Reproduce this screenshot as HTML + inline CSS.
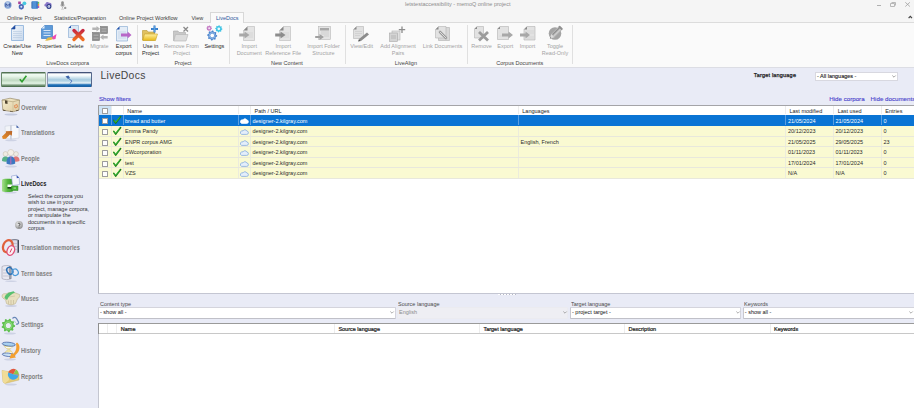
<!DOCTYPE html><html><head><meta charset="utf-8"><style>
*{box-sizing:border-box}
html,body{margin:0;padding:0;width:914px;height:408px;overflow:hidden;background:#e9ebf6;font-family:"Liberation Sans",sans-serif;font-size:5.5px;color:#222}
.a{position:absolute;white-space:nowrap}
svg.a{overflow:visible}
.tab{top:15px;color:#3a3a3a}
.lbl{color:#262626;text-align:center;line-height:6.6px}
.dis{color:#a3a3a3}
.grp{top:59.5px;color:#444}
.sep{top:25px;width:1px;height:39px;background:#e0e0e0}
.nav{color:#808080;font-weight:bold;font-size:6.6px;transform:scaleX(0.865);transform-origin:0 0}
.gh{color:#222}
.cell{color:#2a2a2a}
.sel{color:#fff}
</style></head><body>
<div class="a" style="left:0;top:0;width:914px;height:22px;background:#f5f5f5"></div>
<div class="a" style="left:405px;top:0.8px;color:#8c8c8c">letstestaccessibility - memoQ online project</div>
<div class="a" style="left:876.6px;top:5.2px;width:4.4px;height:0.8px;background:#b0b0b0"></div>
<svg class="a" style="left:890px;top:2px" width="6" height="5"><path d="M1.5 0.5H5.5V3.5M0.5 1.5H4.5V4.5H0.5Z" stroke="#a8a8a8" stroke-width="0.8" fill="none"/></svg>
<svg class="a" style="left:904.7px;top:2.3px" width="5.5" height="5"><path d="M0.3 0.3L4.9 4.5M4.9 0.3L0.3 4.5" stroke="#a0a0a0" stroke-width="0.8"/></svg>
<svg class="a" style="left:907.5px;top:15.3px" width="5" height="4"><path d="M0.6 3.2L2.3 1.3L4 3.2" stroke="#444" stroke-width="1.2" fill="none"/></svg>
<div class="a tab" style="left:7px">Online Project</div>
<div class="a tab" style="left:54px">Statistics/Preparation</div>
<div class="a tab" style="left:119px">Online Project Workflow</div>
<div class="a tab" style="left:191.5px">View</div>
<div class="a" style="left:0;top:22px;width:914px;height:46px;background:#fafafa;border-top:1px solid #dcdcdc;border-bottom:1px solid #dcdde4"></div>
<div class="a" style="left:210px;top:12px;width:34px;height:11px;background:#fafafa;border:1px solid #d8d8d8;border-bottom:none"></div>
<div class="a tab" style="left:216px;color:#2b579a">LiveDocs</div>
<div class="a lbl" style="left:-12.8px;top:43px;width:60px">Create/Use<br>New</div>
<div class="a lbl" style="left:19.200000000000003px;top:43px;width:60px">Properties</div>
<div class="a lbl" style="left:45.5px;top:43px;width:60px">Delete</div>
<div class="a lbl dis" style="left:69.3px;top:43px;width:60px">Migrate</div>
<div class="a lbl" style="left:93.7px;top:43px;width:60px">Export<br>corpus</div>
<div class="a lbl" style="left:120.6px;top:43px;width:60px">Use in<br>Project</div>
<div class="a lbl dis" style="left:151.5px;top:43px;width:60px">Remove From<br>Project</div>
<div class="a lbl" style="left:184.4px;top:43px;width:60px">Settings</div>
<div class="a lbl dis" style="left:219.2px;top:43px;width:60px">Import<br>Document</div>
<div class="a lbl dis" style="left:253.2px;top:43px;width:60px">Import<br>Reference File</div>
<div class="a lbl dis" style="left:293.5px;top:43px;width:60px">Import Folder<br>Structure</div>
<div class="a lbl dis" style="left:331.7px;top:43px;width:60px">View/Edit</div>
<div class="a lbl dis" style="left:368.0px;top:43px;width:60px">Add Alignment<br>Pairs</div>
<div class="a lbl dis" style="left:412.5px;top:43px;width:60px">Link Documents</div>
<div class="a lbl dis" style="left:451.6px;top:43px;width:60px">Remove</div>
<div class="a lbl dis" style="left:475.3px;top:43px;width:60px">Export</div>
<div class="a lbl dis" style="left:497.5px;top:43px;width:60px">Import</div>
<div class="a lbl dis" style="left:525.0px;top:43px;width:60px">Toggle<br>Read-Only</div>
<div class="a lbl grp" style="left:27.599999999999994px;width:80px">LiveDocs corpora</div>
<div class="a lbl grp" style="left:143px;width:80px">Project</div>
<div class="a lbl grp" style="left:247px;width:80px">New Content</div>
<div class="a lbl grp" style="left:365.8px;width:80px">LiveAlign</div>
<div class="a lbl grp" style="left:479.79999999999995px;width:80px">Corpus Documents</div>
<div class="a sep" style="left:137px"></div>
<div class="a sep" style="left:229px"></div>
<div class="a sep" style="left:345px"></div>
<div class="a sep" style="left:467px"></div>
<div class="a sep" style="left:572px"></div>
<svg class="a" style="left:11px;top:25px" width="13" height="16" viewBox="0 0 13 16"><defs><linearGradient id="g1" x1="0" y1="0" x2="1" y2="1"><stop offset="0" stop-color="#f4f8fc"/><stop offset="1" stop-color="#c8d8ec"/></linearGradient></defs><path d="M4 0.5H12.5V15.5H0.5V4Z" fill="url(#g1)" stroke="#9cbce0" stroke-width="1"/><path d="M0.5 4L4 0.5V4Z" fill="#1e4aa0" stroke="#1e4aa0" stroke-width="0.6"/><rect x="2" y="6" width="9" height="0.6" fill="#b4c8e0"/><rect x="2" y="8" width="9" height="0.6" fill="#b4c8e0"/><rect x="2" y="10" width="9" height="0.6" fill="#b4c8e0"/><rect x="2" y="12" width="9" height="0.6" fill="#b4c8e0"/></svg>
<svg class="a" style="left:41px;top:25px" width="16" height="17" viewBox="0 0 16 17"><path d="M3.5 0.5H11.5V13.5H0.5V3.5Z" fill="#5e9ad8" stroke="#4a86c8" stroke-width="0.8"/><path d="M0.5 3.5L3.5 0.5V3.5Z" fill="#e8f0fa"/><rect x="2.5" y="5" width="7" height="0.9" fill="#e4eefa"/><rect x="2.5" y="7.5" width="7" height="0.9" fill="#e4eefa"/><rect x="2.5" y="10" width="7" height="0.9" fill="#e4eefa"/><path d="M4 15.5L7 12.5L12 12L11.5 14.5L6 15.8Z" fill="#e4bc4c"/><path d="M11 12L15.5 9L14.5 14L12 14.5Z" fill="#ec4cb4"/></svg>
<svg class="a" style="left:67.5px;top:25px" width="17" height="17" viewBox="0 0 17 17"><defs><linearGradient id="gx" x1="0" y1="0" x2="0" y2="1"><stop offset="0" stop-color="#c82840"/><stop offset="1" stop-color="#f07020"/></linearGradient></defs><path d="M3 0.5H10.5V12.5H0.5V3Z" fill="#dbe7f4" stroke="#8fb0d6" stroke-width="0.7"/><path d="M0.5 3L3 0.5V3Z" fill="#1e4fa8"/><path d="M6 5.5L15 14.5M15 5.5L6 14.5" stroke="url(#gx)" stroke-width="3.4" stroke-linecap="round"/></svg>
<svg class="a" style="left:92px;top:26px" width="16" height="15" viewBox="0 0 16 15"><rect x="0.5" y="6.5" width="7" height="8" fill="#8e8e8e" stroke="#7a7a7a" stroke-width="0.6"/><rect x="8.5" y="0.5" width="7" height="7" fill="#8e8e8e" stroke="#7a7a7a" stroke-width="0.6"/><path d="M0.3 1.5H4.5V0L8 2.8L4.5 5.6V4.1H0.3Z" fill="#b4b4b4"/><path d="M15.7 9.9H11.5V8.4L8 11.2L11.5 14V12.5H15.7Z" fill="#b4b4b4"/><rect x="1.5" y="8.5" width="5" height="1.5" fill="#a8a8a8"/><rect x="1.5" y="11.5" width="5" height="1.5" fill="#a8a8a8"/><rect x="9.5" y="2" width="5" height="1.5" fill="#a8a8a8"/><rect x="9.5" y="4.5" width="5" height="1.5" fill="#a8a8a8"/></svg>
<svg class="a" style="left:115.5px;top:25.5px" width="16" height="16" viewBox="0 0 16 16"><path d="M3.5 0.5H11.5V15H0.5V3.5Z" fill="#e4edf7" stroke="#8fb0d6" stroke-width="0.7"/><path d="M0.5 3.5L3.5 0.5V3.5Z" fill="#1e4fa8"/><path d="M2 6H10M2 8H10M2 10H10M2 12H10" stroke="#b9cde4" stroke-width="0.6"/><path d="M5 7.5H11.5V5.5L15.5 9L11.5 12.5V10.5H5Z" fill="#b868c8"/></svg>
<svg class="a" style="left:142px;top:25px" width="17" height="17" viewBox="0 0 17 17"><defs><linearGradient id="gf" x1="0" y1="0" x2="0" y2="1"><stop offset="0" stop-color="#fff0a0"/><stop offset="1" stop-color="#e8b818"/></linearGradient></defs><path d="M0.5 5.5H5L6 7H12.5V15H0.5Z" fill="#e0c060" stroke="#b89830" stroke-width="0.6"/><path d="M2.5 9H15.5L13.5 15.5H0.8Z" fill="url(#gf)" stroke="#c8a020" stroke-width="0.6"/><path d="M12.5 0.5V7.5M9 4H16" stroke="#2a70c0" stroke-width="2"/><path d="M12.5 1V7M9.5 4H15.5" stroke="#60a8e8" stroke-width="0.8"/></svg>
<svg class="a" style="left:173px;top:25.5px" width="17" height="16" viewBox="0 0 17 16"><path d="M0.5 5H5L6 6.5H12.5V14.5H0.5Z" fill="#c8c8c8" stroke="#aaa" stroke-width="0.6"/><path d="M2.5 8.5H15L13 15H0.8Z" fill="#dcdcdc" stroke="#b4b4b4" stroke-width="0.6"/><path d="M10.5 1L15 5.5M15 1L10.5 5.5" stroke="#8a8a8a" stroke-width="1.3"/></svg>
<svg class="a" style="left:205.5px;top:25px" width="17" height="17" viewBox="0 0 17 17"><polygon points="11.20,10.50 11.10,11.48 9.90,12.03 9.53,12.72 9.74,14.04 8.98,14.66 7.73,14.20 6.98,14.42 6.20,15.50 5.22,15.40 4.67,14.20 3.98,13.83 2.66,14.04 2.04,13.28 2.50,12.03 2.28,11.28 1.20,10.50 1.30,9.52 2.50,8.97 2.87,8.28 2.66,6.96 3.42,6.34 4.67,6.80 5.42,6.58 6.20,5.50 7.18,5.60 7.73,6.80 8.42,7.17 9.74,6.96 10.36,7.72 9.90,8.97 10.12,9.72" fill="#4a84cc"/><circle cx="6.2" cy="10.5" r="1.90" fill="#ffffff"/><circle cx="6.2" cy="10.5" r="2.9" fill="none" stroke="#9cc0ec" stroke-width="0.9"/><polygon points="6.00,3.20 5.95,3.75 5.27,4.06 5.06,4.44 5.18,5.18 4.76,5.53 4.06,5.27 3.64,5.40 3.20,6.00 2.65,5.95 2.34,5.27 1.96,5.06 1.22,5.18 0.87,4.76 1.13,4.06 1.00,3.64 0.40,3.20 0.45,2.65 1.13,2.34 1.34,1.96 1.22,1.22 1.64,0.87 2.34,1.13 2.76,1.00 3.20,0.40 3.75,0.45 4.06,1.13 4.44,1.34 5.18,1.22 5.53,1.64 5.27,2.34 5.40,2.76" fill="#c47cc4"/><circle cx="3.2" cy="3.2" r="1.06" fill="#f4e0f4"/><polygon points="16.40,3.80 16.33,4.50 15.46,4.90 15.19,5.40 15.35,6.35 14.80,6.79 13.90,6.46 13.36,6.62 12.80,7.40 12.10,7.33 11.70,6.46 11.20,6.19 10.25,6.35 9.81,5.80 10.14,4.90 9.98,4.36 9.20,3.80 9.27,3.10 10.14,2.70 10.41,2.20 10.25,1.25 10.80,0.81 11.70,1.14 12.24,0.98 12.80,0.20 13.50,0.27 13.90,1.14 14.40,1.41 15.35,1.25 15.79,1.80 15.46,2.70 15.62,3.24" fill="#40c4e4"/><circle cx="12.8" cy="3.8" r="1.37" fill="#e8fafe"/></svg>
<svg class="a" style="left:239px;top:26px" width="17" height="15" viewBox="0 0 17 15"><path d="M8.5 0.5H15.5V14.5H4.5V4.5Z" fill="#e4e4e4" stroke="#b8b8b8" stroke-width="0.6"/><path d="M4.5 4.5L8.5 0.5V4.5Z" fill="#888"/><path d="M6.5 7H14M6.5 9H14M6.5 11H14" stroke="#c8c8c8" stroke-width="0.5"/><path d="M0.2 7.5H5.5V5.5L10.5 9L5.5 12.5V10.5H0.2Z" fill="#a8a8a8"/></svg>
<svg class="a" style="left:275px;top:26px" width="17" height="15" viewBox="0 0 17 15"><path d="M8.5 0.5H15.5V14.5H4.5V4.5Z" fill="#e4e4e4" stroke="#b8b8b8" stroke-width="0.6"/><path d="M4.5 4.5L8.5 0.5V4.5Z" fill="#888"/><path d="M6.5 7H14M6.5 9H14M6.5 11H14" stroke="#c8c8c8" stroke-width="0.5"/><path d="M0.2 7.5H5.5V5.5L10.5 9L5.5 12.5V10.5H0.2Z" fill="#8c8c8c"/></svg>
<svg class="a" style="left:315px;top:26px" width="17" height="15" viewBox="0 0 17 15"><rect x="3.5" y="0.5" width="12" height="13" fill="#e4e4e4" stroke="#b8b8b8" stroke-width="0.6"/><rect x="5" y="2" width="9" height="2.5" fill="#a8a8a8"/><path d="M6 6H14M6 8H14M9 10H14" stroke="#c0c0c0" stroke-width="0.6"/><path d="M0.2 10H4.5V8L9 11L4.5 14V12H0.2Z" fill="#a0a0a0"/></svg>
<svg class="a" style="left:353px;top:26px" width="17" height="15" viewBox="0 0 17 15"><path d="M3.5 0.5H10.5V12.5H0.5V3.5Z" fill="#e0e0e0" stroke="#b4b4b4" stroke-width="0.6"/><path d="M0.5 3.5L3.5 0.5V3.5Z" fill="#888"/><path d="M2 5.5H9M2 7.5H9M2 9.5H7" stroke="#c4c4c4" stroke-width="0.5"/><path d="M6 13L14 6.5L16 8.5L8 15Z" fill="#8c8c8c"/><path d="M5 15.5L6 13L8 15Z" fill="#555"/></svg>
<svg class="a" style="left:389px;top:25.5px" width="18" height="16" viewBox="0 0 18 16"><rect x="3" y="5" width="8" height="9" fill="#e0e0e0" stroke="#b4b4b4" stroke-width="0.6"/><rect x="0.5" y="7" width="8" height="8.5" fill="#d4d4d4" stroke="#a8a8a8" stroke-width="0.6"/><path d="M2 10H7M2 12H7" stroke="#999" stroke-width="0.5"/><path d="M13 0.5V7M9.8 3.7H16.2" stroke="#8c8c8c" stroke-width="1.3"/></svg>
<svg class="a" style="left:435px;top:26px" width="16" height="15" viewBox="0 0 16 15"><path d="M3.5 1.5H14.5V14.5H3.5Z" fill="#d8d8d8" stroke="#b0b0b0" stroke-width="0.6"/><path d="M3.5 0.5H11V12H0.5V3.5Z" fill="#e2e2e2" stroke="#b4b4b4" stroke-width="0.6"/><path d="M0.5 3.5L3.5 0.5V3.5Z" fill="#888"/><path d="M5 6L11 12" stroke="#9a9a9a" stroke-width="2.6" stroke-linecap="round"/><path d="M5 6L11 12" stroke="#dcdcdc" stroke-width="1" stroke-linecap="round"/></svg>
<svg class="a" style="left:474px;top:26px" width="16" height="15" viewBox="0 0 16 15"><path d="M3 0.5H9.5V12H0.5V3Z" fill="#e2e2e2" stroke="#b4b4b4" stroke-width="0.6"/><path d="M0.5 3L3 0.5V3Z" fill="#888"/><path d="M5 6L14 14.5M14 6L5 14.5" stroke="#9c9c9c" stroke-width="2.8"/></svg>
<svg class="a" style="left:497px;top:26px" width="17" height="15" viewBox="0 0 17 15"><path d="M3 0.5H11.5V13.5H0.5V3Z" fill="#e2e2e2" stroke="#b4b4b4" stroke-width="0.6"/><path d="M0.5 3L3 0.5V3Z" fill="#888"/><path d="M2.5 10H6.5" stroke="#c8c8c8" stroke-width="0.5"/><path d="M5 7.5H11.5V5.5L16 9L11.5 12.5V10.5H5Z" fill="#a8a8a8"/></svg>
<svg class="a" style="left:520px;top:26px" width="16" height="15" viewBox="0 0 16 15"><path d="M7 0.5H15V14H4V3.5Z" fill="#e2e2e2" stroke="#b4b4b4" stroke-width="0.6"/><path d="M4 3.5L7 0.5V3.5Z" fill="#888"/><path d="M6.5 5H14M6.5 7H14M6.5 11H14M6.5 13H14" stroke="#cacaca" stroke-width="0.5"/><path d="M0 7.5H5.5V5.5L10 9L5.5 12.5V10.5H0Z" fill="#a8a8a8"/></svg>
<svg class="a" style="left:546px;top:25px" width="17" height="17" viewBox="0 0 17 17"><circle cx="9" cy="8.5" r="6.3" fill="#a4a4a4"/><g transform="rotate(45 9 8.5)"><rect x="6.6" y="0.5" width="4.8" height="11" fill="#b8b8b8"/><rect x="7.6" y="1" width="1" height="10" fill="#8a8a8a"/><rect x="9.4" y="1" width="1" height="10" fill="#d0d0d0"/><rect x="6.6" y="-0.5" width="4.8" height="2" rx="0.8" fill="#909090"/><path d="M6.6 11.5L9 15.5L11.4 11.5Z" fill="#dcdcdc"/><path d="M8.3 14.3L9 15.8L9.7 14.3Z" fill="#666"/></g></svg>
<svg class="a" style="left:4.3px;top:0.8px" width="8" height="8" viewBox="0 0 8 8"><circle cx="3.9" cy="4" r="3.7" fill="#8aa8d8"/><circle cx="3.4" cy="3.2" r="2.2" fill="#c8d8f0" opacity="0.7"/><path d="M1.9 5.6V2.6L3.9 4.6L5.9 2.6V5.6" stroke="#1e3c90" stroke-width="0.9" fill="none"/></svg>
<svg class="a" style="left:17.5px;top:0.6px" width="9" height="9" viewBox="0 0 9 9"><rect x="0.2" y="0.5" width="2.6" height="2.6" fill="#a8449a"/><circle cx="6.4" cy="2.3" r="1.9" fill="#48c8e0"/><circle cx="3.3" cy="5.7" r="2.6" fill="#4868b8"/><circle cx="3.3" cy="5.7" r="1" fill="#dde6f6"/><path d="M2.6 8L3.3 8.8L4 8Z" fill="#4868b8"/></svg>
<svg class="a" style="left:31px;top:1px" width="8.5" height="8" viewBox="0 0 8.5 8"><rect x="0.5" y="0.3" width="6.5" height="7.4" rx="0.6" fill="#3a7ac8"/><rect x="1.2" y="0.3" width="4" height="7.4" fill="#60a0e0" opacity="0.6"/><rect x="6.8" y="0.8" width="1.4" height="2" fill="#58c058"/><rect x="6.8" y="2.9" width="1.4" height="2" fill="#f09040"/><rect x="6.8" y="5" width="1.4" height="2" fill="#b058c0"/><path d="M0.3 2H1.5M0.3 4H1.5M0.3 6H1.5" stroke="#204880" stroke-width="0.5"/></svg>
<svg class="a" style="left:44.3px;top:1px" width="8.5" height="8.5" viewBox="0 0 8.5 8.5"><path d="M1 5.5C0 5 0 3 1.5 2.8C1.8 1 4 0.5 5 1.8C6.5 1.2 8 2.3 7.5 4L7 5.5Z" fill="#8a78c8"/><circle cx="4.9" cy="5.4" r="2.5" fill="#2c3c88"/><circle cx="4.9" cy="5.4" r="1.3" fill="#d8dcf0"/><path d="M4.4 4.8L5.4 4.8L4.9 6Z" fill="#2c3c88"/></svg>
<svg class="a" style="left:59.5px;top:1px" width="7" height="8.5" viewBox="0 0 7 8.5"><rect x="1.2" y="0.3" width="2.6" height="5" rx="1.3" fill="#8c8c8c"/><path d="M0.5 3.5V4.3C0.5 6 4.5 6 4.5 4.3V3.5" stroke="#a0a0a0" stroke-width="0.5" fill="none"/><path d="M2.5 6V7.5" stroke="#999" stroke-width="0.6"/><circle cx="5.2" cy="6.9" r="1.2" fill="#9c9c9c"/><path d="M1 8.2H4" stroke="#aaa" stroke-width="0.5"/></svg>
<div class="a" style="left:0.5px;top:72px;width:45px;height:14.5px;border-radius:1px;border-left:1px solid #6a886c;border-right:1px solid #9ab09c;background:linear-gradient(#4a6a4c 0,#5a7a5c 6%,#f0fbf2 14%,#e8f6ea 28%,#c0d8c2 55%,#d8ecda 70%,#e0f0e2 76%,#7a9a7c 88%,#3e6040 100%)"></div>
<svg class="a" style="left:19px;top:74.5px" width="8" height="8"><path d="M0.8 4.2L3 6.8L7.4 0.8" stroke="#2e9e2e" stroke-width="1.6" fill="none"/></svg>
<div class="a" style="left:46.5px;top:72px;width:45px;height:14.5px;border-radius:1px;border-left:1px solid #9098b0;border-right:1px solid #56688c;background:linear-gradient(#3c4c70 0,#4a5a80 6%,#ffffff 12%,#f4fafc 24%,#a8cce0 52%,#b8d8e8 62%,#eaf4f8 74%,#4a8cc4 82%,#1a6cb4 90%,#1a5c9c 100%)"></div>
<svg class="a" style="left:65px;top:74.5px" width="8" height="9"><path d="M0.5 1.5L3.5 0.5L5 3L3 4Z" fill="#3c64a8"/><path d="M3.5 3.5L7 6L5 8.5" stroke="#5a7ec0" stroke-width="1" fill="none"/></svg>
<div class="a" style="left:0;top:91px;width:91.5px;height:1px;background:#c9cbd4"></div>
<div class="a nav" style="left:21px;top:103.6px">Overview</div>
<div class="a nav" style="left:21px;top:129.2px">Translations</div>
<div class="a nav" style="left:21px;top:155.1px">People</div>
<div class="a nav" style="left:21px;top:244.1px">Translation memories</div>
<div class="a nav" style="left:21px;top:269.70000000000005px">Term bases</div>
<div class="a nav" style="left:21px;top:295.3px">Muses</div>
<div class="a nav" style="left:21px;top:321.1px">Settings</div>
<div class="a nav" style="left:21px;top:346.90000000000003px">History</div>
<div class="a nav" style="left:21px;top:372.70000000000005px">Reports</div>
<div class="a nav" style="left:20.8px;top:180.2px;color:#1a1a1a">LiveDocs</div>
<div class="a" style="left:28px;top:192.7px;line-height:6.45px;color:#333">Select the corpora you<br>wish to use in your<br>project, manage corpora,<br>or manipulate the<br>documents in a specific<br>corpus</div>
<svg class="a" style="left:15.3px;top:221px" width="8" height="8" viewBox="0 0 8 8"><defs><radialGradient id="gh" cx="0.4" cy="0.35" r="0.7"><stop offset="0" stop-color="#f0f0f0"/><stop offset="0.6" stop-color="#b4b4b4"/><stop offset="1" stop-color="#8c8c8c"/></radialGradient></defs><circle cx="4" cy="4" r="3.9" fill="url(#gh)"/><path d="M2.9 3C2.9 2 5.1 2 5.1 3.1C5.1 3.9 4 4 4 4.9" stroke="#4a4a4a" stroke-width="0.9" fill="none"/><circle cx="4" cy="6.1" r="0.5" fill="#4a4a4a"/></svg>
<svg class="a" style="left:0.5px;top:97px" width="19.5" height="19" viewBox="0 0 19.5 19"><defs><linearGradient id="gb" x1="0" y1="0" x2="1" y2="1"><stop offset="0" stop-color="#f6eed0"/><stop offset="1" stop-color="#dccaa0"/></linearGradient></defs><ellipse cx="10" cy="17.5" rx="6.5" ry="1.1" fill="#c4cade"/><path d="M1 3L9 1.2L18.5 3L18 13L12 14.8L1.8 13.2Z" fill="url(#gb)" stroke="#8c7c58" stroke-width="0.6"/><path d="M1 3L12 4.8L18.5 3" stroke="#a89870" stroke-width="0.6" fill="none"/><path d="M12 4.8V14.8" stroke="#c8b890" stroke-width="0.6"/><path d="M4 3.3L6.5 3.8V7L4 6.5Z" fill="#504430"/><path d="M2 12.5L4.5 13.2V14L2 13.5ZM9 13.8L12 14.5V15L9 14.6ZM15 13.5L17.5 12.8V13.6L15 14.3Z" fill="#504430"/><path d="M13.5 8.5L16 7.5L16.5 10L14 11Z" fill="none" stroke="#e08850" stroke-width="0.9"/></svg>
<svg class="a" style="left:0.5px;top:123px" width="19" height="19" viewBox="0 0 19 19"><defs><linearGradient id="ga" x1="0" y1="1" x2="1" y2="0"><stop offset="0" stop-color="#e8902c"/><stop offset="1" stop-color="#b86428"/></linearGradient></defs><ellipse cx="10" cy="17.3" rx="6" ry="0.9" fill="#cdd2e4"/><path d="M4 3.2L10 2.5V16L4.5 15.5Z" fill="#f2f4f8" stroke="#c4ccd8" stroke-width="0.5"/><path d="M10 2.5L15.5 2.2L18 4.5V15L10 16Z" fill="#f6f8fc" stroke="#c0c8d8" stroke-width="0.5"/><path d="M15.5 2.2V4.8H18Z" fill="#2a4c9c"/><path d="M10 2.5V16.5" stroke="#a8b0c0" stroke-width="0.6"/><path d="M1 13.5L5 9.8L4.8 8.2L11.2 8L10.8 12.8L9 11.6L4.8 15.8L1.8 16Z" fill="url(#ga)"/></svg>
<svg class="a" style="left:0.5px;top:148px" width="19.5" height="21" viewBox="0 0 19.5 21"><ellipse cx="10" cy="18.5" rx="6" ry="0.9" fill="#cdd2e4"/><circle cx="4.5" cy="6" r="2.4" fill="#f0ece4" stroke="#c0b8a8" stroke-width="0.5"/><path d="M1 13C1 9.5 2.5 8.6 4.5 8.6S8 9.5 8 13C6 14 3 14 1 13Z" fill="#58b088"/><circle cx="15" cy="6" r="2.4" fill="#f0ece4" stroke="#c0b8a8" stroke-width="0.5"/><path d="M11.5 13C11.5 9.5 13 8.6 15 8.6S18.5 9.5 18.5 13C16.5 14 13.5 14 11.5 13Z" fill="#e07878"/><circle cx="9.8" cy="4.6" r="3.1" fill="#f4f0e8" stroke="#c4bcac" stroke-width="0.5"/><path d="M5.5 15.5C5.5 9.8 7.3 8.4 9.8 8.4S14.2 9.8 14.2 15.5C12 16.8 7.5 16.8 5.5 15.5Z" fill="#3c78c0"/><path d="M9.3 8.6L10.3 8.6L10.5 15L9.8 17L9.1 15Z" fill="#a86cb8"/></svg>
<svg class="a" style="left:0.5px;top:174px" width="19.5" height="20" viewBox="0 0 19.5 20"><defs><linearGradient id="gg" x1="0" y1="0" x2="1" y2="0"><stop offset="0" stop-color="#a8e090"/><stop offset="0.5" stop-color="#58b840"/><stop offset="1" stop-color="#3a9a2a"/></linearGradient></defs><ellipse cx="9.5" cy="18.6" rx="6.5" ry="0.8" fill="#cdd2e4"/><path d="M1 6C1 5.3 3 4.8 6.5 4.8S12 5.3 12 6V17C12 17.6 10 18 6.5 18S1 17.6 1 17Z" fill="url(#gg)"/><path d="M10.5 2L15.5 1.2L18.2 3.8L18.6 10.5L11.5 11.5Z" fill="#f4f6fc" stroke="#8c9cd0" stroke-width="0.6"/><path d="M15.5 1.2L15.8 4.2L18.2 3.8Z" fill="#3454b0"/><rect x="6.5" y="10.5" width="5" height="2.6" fill="#f8fff8"/><rect x="6.5" y="13" width="4.5" height="1.6" fill="#183c18"/><path d="M10.5 12H17V16.5H10.5Z" fill="#48b038" stroke="#2e8a22" stroke-width="0.5"/><rect x="12.5" y="13.5" width="2.5" height="1.2" fill="#a8e098"/></svg>
<svg class="a" style="left:0.5px;top:237px" width="19.5" height="21" viewBox="0 0 19.5 21"><path d="M9 3C11 1.8 16 1.8 18 3V15.5C16 16.8 11 16.8 9 15.5Z" fill="#dcdae8"/><path d="M16.5 2.6C17.5 3 18 3.2 18 3.5V15.5L16.5 16Z" fill="#404858"/><path d="M9.5 3.5C11 2.5 15 2.5 16.5 3" stroke="#505868" stroke-width="0.8" fill="none"/><path d="M10 6.5H16M10 9.5H16M10 12.5H16" stroke="#a8a8c0" stroke-width="0.5"/><ellipse cx="6.8" cy="9.2" rx="4.6" ry="6.3" transform="rotate(22 6.8 9.2)" fill="none" stroke="#e0603c" stroke-width="2.2"/><ellipse cx="9.8" cy="13.5" rx="3.6" ry="5" transform="rotate(22 9.8 13.5)" fill="#fcf0f4" stroke="#e05078" stroke-width="1.3"/><path d="M9 15.5L10.8 11.5" stroke="#d84060" stroke-width="1"/></svg>
<svg class="a" style="left:0.5px;top:263px" width="19.5" height="20" viewBox="0 0 19.5 20"><ellipse cx="10" cy="18.2" rx="6" ry="0.8" fill="#cdd2e4"/><path d="M1 3.5C3 2.2 8.5 2.2 10.5 3.5V15.5C8.5 17 3 17 1 15.5Z" fill="#e8e8f0" stroke="#9c9cac" stroke-width="0.6"/><path d="M9 3V16" stroke="#505868" stroke-width="1"/><path d="M2 7H8.5M2 10H8.5M2 13H8.5" stroke="#b0b0c4" stroke-width="0.6"/><ellipse cx="8.8" cy="7.8" rx="2.8" ry="3.6" transform="rotate(-30 8.8 7.8)" fill="none" stroke="#2c70b4" stroke-width="1.5"/><ellipse cx="14.2" cy="9.2" rx="3" ry="3.3" transform="rotate(-30 14.2 9.2)" fill="none" stroke="#4c9ad8" stroke-width="1.2"/></svg>
<svg class="a" style="left:0.5px;top:289px" width="19.5" height="19" viewBox="0 0 19.5 19"><ellipse cx="10" cy="17" rx="6" ry="0.9" fill="#cdd2e4"/><path d="M1 7C1 5 3 4.3 5 4.8L8 3.6L14 3.8L18.5 5.5C19 7.5 18 9.2 16.5 9.8L14.5 14.5C12.5 16.3 7.5 16.3 5.5 14.5L4.5 10.5C2.5 9.8 1 8.8 1 7Z" fill="#e8e0c0" stroke="#b4a880" stroke-width="0.5"/><path d="M3.5 9C4 5.5 7.5 3 12.5 2.2L14 3.4C10.5 4.6 7.5 7.5 6 11Z" fill="#58c070"/><path d="M7.5 11.5V15M10 11V15.5M12.5 11V15" stroke="#c0b490" stroke-width="0.6"/><path d="M8 8L14 7" stroke="#c8bc98" stroke-width="0.6"/></svg>
<svg class="a" style="left:0px;top:314px" width="20" height="21" viewBox="0 0 20 21"><ellipse cx="10" cy="19.5" rx="6" ry="0.9" fill="#cdd2e4"/><polygon points="15.10,11.50 15.00,12.68 13.41,13.36 13.01,14.22 13.51,15.87 12.67,16.71 11.02,16.21 10.16,16.61 9.48,18.20 8.30,18.30 7.36,16.86 6.44,16.61 4.90,17.39 3.93,16.71 4.13,15.00 3.59,14.22 1.91,13.83 1.60,12.68 2.86,11.50 2.94,10.56 1.91,9.17 2.41,8.10 4.13,8.00 4.80,7.33 4.90,5.61 5.97,5.11 7.36,6.14 8.30,6.06 9.48,4.80 10.63,5.11 11.02,6.79 11.80,7.33 13.51,7.13 14.19,8.10 13.41,9.64 13.66,10.56" fill="#60c050"/><circle cx="8.3" cy="11.5" r="2.58" fill="#e9ebf6"/><circle cx="8.3" cy="11.5" r="3.6" fill="none" stroke="#88d878" stroke-width="1.2"/><path d="M12.5 4.5C13.5 3 15.5 3 16.5 4.5L18.5 8C19 9.5 17.5 10.5 16 10" stroke="#6a88b8" stroke-width="1.3" fill="none"/><path d="M14 6.5L16 9" stroke="#b8c8d8" stroke-width="1"/></svg>
<svg class="a" style="left:0.5px;top:340px" width="19.5" height="21" viewBox="0 0 19.5 21"><ellipse cx="9" cy="19.5" rx="6" ry="0.9" fill="#cdd2e4"/><path d="M2.5 5C4 8 6 9 7.5 9.5C6 10 4 11.5 2.5 14.5H12.5C11.5 11.5 9.5 10 8 9.5C9.5 9 11.5 7.5 13 5Z" fill="#f0e4a0" stroke="#c8c0a0" stroke-width="0.4"/><path d="M5 7.5H10.5M5 12.5H10.5" stroke="#fff" stroke-width="0.8"/><ellipse cx="7.8" cy="4.2" rx="6.6" ry="1.9" transform="rotate(6 7.8 4.2)" fill="#a8d0f0" stroke="#3c5aa0" stroke-width="0.7"/><ellipse cx="7.5" cy="14.8" rx="6.3" ry="1.7" transform="rotate(6 7.5 14.8)" fill="#c8e0f4" stroke="#3c5aa0" stroke-width="0.7"/><path d="M16 2.5C18.5 4 19 7.5 18 10.5C17 13 15 14.5 13.5 15.5L15 17.5L8.5 18.5L10.5 13L12 14.2C14.5 12 16 9 15 3.5Z" fill="#f4a030"/></svg>
<svg class="a" style="left:0.5px;top:365px" width="19.5" height="21" viewBox="0 0 19.5 21"><ellipse cx="10" cy="19.5" rx="6" ry="0.9" fill="#cdd2e4"/><path d="M1 5.5L7 6.5L18 9V15L4 18.5L2 17Z" fill="#e4cc78" stroke="#c4a850" stroke-width="0.4"/><path d="M1 5.5L7 6.5L8 15L4 18.5L2 17Z" fill="#f0dc98"/><path d="M12.3 9.3L15.00 4.62A5.4 5.4 0 0 0 7.23 7.45Z" fill="#e05840"/><path d="M12.3 9.3L17.68 9.77A5.4 5.4 0 0 0 15.00 4.62Z" fill="#88c850"/><path d="M12.3 9.3L17.52 10.70A5.4 5.4 0 0 0 17.68 9.77Z" fill="#9868c0"/><path d="M12.3 9.3L7.23 7.45A5.4 5.4 0 1 0 17.52 10.70Z" fill="#40a8e8"/></svg>
<div class="a" style="left:100.5px;top:70px;font-size:10.4px;color:#444;letter-spacing:0.3px">LiveDocs</div>
<div class="a" style="left:753.7px;top:72.3px;color:#1a1a1a;-webkit-text-stroke:0.25px #1a1a1a;letter-spacing:0.2px">Target language</div>
<div class="a" style="left:815px;top:71.5px;width:83px;height:9.5px;background:#fff;border:1px solid #d8d8e0"></div>
<div class="a" style="left:817px;top:73.3px;color:#1a1a1a;-webkit-text-stroke:0.12px #1a1a1a">- All languages -</div>
<svg class="a" style="left:891.5px;top:75px" width="4" height="3"><path d="M0.3 0.5L2 2.2L3.7 0.5" stroke="#666" stroke-width="0.6" fill="none"/></svg>
<div class="a" style="left:98.9px;top:95.2px;font-size:6.2px;color:#4a44cc;-webkit-text-stroke:0.12px #4a44cc">Show filters</div>
<div class="a" style="left:829.2px;top:95.2px;font-size:6.2px;color:#4a44cc;-webkit-text-stroke:0.12px #4a44cc">Hide corpora</div>
<div class="a" style="left:870.6px;top:95.2px;font-size:6.2px;color:#4a44cc;-webkit-text-stroke:0.12px #4a44cc">Hide documents</div>
<div class="a" style="left:98px;top:105px;width:816px;height:189px;background:#fff;border:1px solid #b4b6c0;border-right:none;border-top-color:#a4a4a8;border-bottom-color:#c4c6d2"></div>
<div class="a" style="left:99px;top:106px;width:12px;height:9px;background:#cde3f6"></div>
<div class="a" style="left:98px;top:105px;width:1px;height:10px;background:#9a9a9a"></div>
<div class="a" style="left:111px;top:106px;width:1px;height:8px;background:#ececec"></div>
<div class="a" style="left:123px;top:106px;width:1px;height:8px;background:#ececec"></div>
<div class="a" style="left:238px;top:106px;width:1px;height:8px;background:#ececec"></div>
<div class="a" style="left:250px;top:106px;width:1px;height:8px;background:#ececec"></div>
<div class="a" style="left:518px;top:106px;width:1px;height:8px;background:#ececec"></div>
<div class="a" style="left:785px;top:106px;width:1px;height:8px;background:#ececec"></div>
<div class="a" style="left:833px;top:106px;width:1px;height:8px;background:#ececec"></div>
<div class="a" style="left:881px;top:106px;width:1px;height:8px;background:#ececec"></div>
<div class="a gh" style="left:127.3px;top:107.8px">Name</div>
<div class="a gh" style="left:254.6px;top:107.8px">Path / URL</div>
<div class="a gh" style="left:522.3px;top:107.8px">Languages</div>
<div class="a gh" style="left:789.5px;top:107.8px">Last modified</div>
<div class="a gh" style="left:837.7px;top:107.8px">Last used</div>
<div class="a gh" style="left:885.3px;top:107.8px">Entries</div>
<div class="a" style="left:102px;top:107.8px;width:6px;height:6px;background:#fdfdfd;border:0.8px solid #9c9c9c;border-radius:0.6px"></div>
<div class="a" style="left:99px;top:115px;width:815px;height:11px;background:#0a74d4;border-bottom:1px solid #0a74d4"></div>
<div class="a" style="left:111px;top:115px;width:1px;height:10px;background:#5c9ee0"></div>
<div class="a" style="left:123px;top:115px;width:1px;height:10px;background:#5c9ee0"></div>
<div class="a" style="left:238px;top:115px;width:1px;height:10px;background:#5c9ee0"></div>
<div class="a" style="left:250px;top:115px;width:1px;height:10px;background:#5c9ee0"></div>
<div class="a" style="left:518px;top:115px;width:1px;height:10px;background:#5c9ee0"></div>
<div class="a" style="left:785px;top:115px;width:1px;height:10px;background:#5c9ee0"></div>
<div class="a" style="left:833px;top:115px;width:1px;height:10px;background:#5c9ee0"></div>
<div class="a" style="left:881px;top:115px;width:1px;height:10px;background:#5c9ee0"></div>
<div class="a" style="left:102px;top:117.7px;width:6px;height:6px;background:#fdfdfd;border:0.8px solid #9c9c9c;border-radius:0.6px"></div>
<svg class="a" style="left:113px;top:115px" width="9" height="10"><path d="M0.8 5.4L2.7 8.1L7.6 1.6" stroke="#1a7a1a" stroke-width="1.6" stroke-linecap="round" stroke-linejoin="round" fill="none"/><path d="M1 5.3L2.6 7.3L6.6 2.4" stroke="#44d444" stroke-width="0.8" fill="none"/></svg>
<svg class="a" style="left:240.3px;top:118px" width="8.5" height="6"><path d="M1.6 5.4H6.6A1.7 1.7 0 0 0 6.8 2A2.1 2.1 0 0 0 3 1.9A1.7 1.7 0 0 0 1.6 5.4Z" fill="#ffffff" stroke="#ffffff" stroke-width="0.7"/></svg>
<div class="a sel" style="left:125px;top:117.7px">bread and butter</div>
<div class="a sel" style="left:252.5px;top:117.7px">designer-2.kilgray.com</div>
<div class="a sel" style="left:788px;top:117.7px">21/05/2024</div>
<div class="a sel" style="left:835.5px;top:117.7px">21/05/2024</div>
<div class="a sel" style="left:883.5px;top:117.7px">0</div>
<div class="a" style="left:99px;top:126px;width:815px;height:11px;background:#fafad2;border-bottom:1px solid #e8e8dc"></div>
<div class="a" style="left:111px;top:126px;width:1px;height:10px;background:#ececdc"></div>
<div class="a" style="left:123px;top:126px;width:1px;height:10px;background:#ececdc"></div>
<div class="a" style="left:238px;top:126px;width:1px;height:10px;background:#ececdc"></div>
<div class="a" style="left:250px;top:126px;width:1px;height:10px;background:#ececdc"></div>
<div class="a" style="left:518px;top:126px;width:1px;height:10px;background:#ececdc"></div>
<div class="a" style="left:785px;top:126px;width:1px;height:10px;background:#ececdc"></div>
<div class="a" style="left:833px;top:126px;width:1px;height:10px;background:#ececdc"></div>
<div class="a" style="left:881px;top:126px;width:1px;height:10px;background:#ececdc"></div>
<div class="a" style="left:102px;top:128.7px;width:6px;height:6px;background:#fdfdfd;border:0.8px solid #9c9c9c;border-radius:0.6px"></div>
<svg class="a" style="left:113px;top:126px" width="9" height="10"><path d="M0.8 5.4L2.7 8.1L7.6 1.6" stroke="#1a7a1a" stroke-width="1.6" stroke-linecap="round" stroke-linejoin="round" fill="none"/><path d="M1 5.3L2.6 7.3L6.6 2.4" stroke="#44d444" stroke-width="0.8" fill="none"/></svg>
<svg class="a" style="left:240.3px;top:129px" width="8.5" height="6"><path d="M1.6 5.4H6.6A1.7 1.7 0 0 0 6.8 2A2.1 2.1 0 0 0 3 1.9A1.7 1.7 0 0 0 1.6 5.4Z" fill="#e4eefa" stroke="#78a4dc" stroke-width="0.7"/></svg>
<div class="a cell" style="left:125px;top:128.2px">Emma Pandy</div>
<div class="a cell" style="left:252.5px;top:128.2px">designer-2.kilgray.com</div>
<div class="a cell" style="left:788px;top:128.2px">20/12/2023</div>
<div class="a cell" style="left:835.5px;top:128.2px">20/12/2023</div>
<div class="a cell" style="left:883.5px;top:128.2px">0</div>
<div class="a" style="left:99px;top:137px;width:815px;height:10px;background:#fafad2;border-bottom:1px solid #e8e8dc"></div>
<div class="a" style="left:111px;top:137px;width:1px;height:9px;background:#ececdc"></div>
<div class="a" style="left:123px;top:137px;width:1px;height:9px;background:#ececdc"></div>
<div class="a" style="left:238px;top:137px;width:1px;height:9px;background:#ececdc"></div>
<div class="a" style="left:250px;top:137px;width:1px;height:9px;background:#ececdc"></div>
<div class="a" style="left:518px;top:137px;width:1px;height:9px;background:#ececdc"></div>
<div class="a" style="left:785px;top:137px;width:1px;height:9px;background:#ececdc"></div>
<div class="a" style="left:833px;top:137px;width:1px;height:9px;background:#ececdc"></div>
<div class="a" style="left:881px;top:137px;width:1px;height:9px;background:#ececdc"></div>
<div class="a" style="left:102px;top:139.7px;width:6px;height:6px;background:#fdfdfd;border:0.8px solid #9c9c9c;border-radius:0.6px"></div>
<svg class="a" style="left:113px;top:137px" width="9" height="10"><path d="M0.8 5.4L2.7 8.1L7.6 1.6" stroke="#1a7a1a" stroke-width="1.6" stroke-linecap="round" stroke-linejoin="round" fill="none"/><path d="M1 5.3L2.6 7.3L6.6 2.4" stroke="#44d444" stroke-width="0.8" fill="none"/></svg>
<svg class="a" style="left:240.3px;top:140px" width="8.5" height="6"><path d="M1.6 5.4H6.6A1.7 1.7 0 0 0 6.8 2A2.1 2.1 0 0 0 3 1.9A1.7 1.7 0 0 0 1.6 5.4Z" fill="#e4eefa" stroke="#78a4dc" stroke-width="0.7"/></svg>
<div class="a cell" style="left:125px;top:138.7px">ENPR corpus AMG</div>
<div class="a cell" style="left:252.5px;top:138.7px">designer-2.kilgray.com</div>
<div class="a cell" style="left:520.5px;top:138.7px">English, French</div>
<div class="a cell" style="left:788px;top:138.7px">21/05/2025</div>
<div class="a cell" style="left:835.5px;top:138.7px">29/05/2025</div>
<div class="a cell" style="left:883.5px;top:138.7px">23</div>
<div class="a" style="left:99px;top:147px;width:815px;height:11px;background:#fafad2;border-bottom:1px solid #e8e8dc"></div>
<div class="a" style="left:111px;top:147px;width:1px;height:10px;background:#ececdc"></div>
<div class="a" style="left:123px;top:147px;width:1px;height:10px;background:#ececdc"></div>
<div class="a" style="left:238px;top:147px;width:1px;height:10px;background:#ececdc"></div>
<div class="a" style="left:250px;top:147px;width:1px;height:10px;background:#ececdc"></div>
<div class="a" style="left:518px;top:147px;width:1px;height:10px;background:#ececdc"></div>
<div class="a" style="left:785px;top:147px;width:1px;height:10px;background:#ececdc"></div>
<div class="a" style="left:833px;top:147px;width:1px;height:10px;background:#ececdc"></div>
<div class="a" style="left:881px;top:147px;width:1px;height:10px;background:#ececdc"></div>
<div class="a" style="left:102px;top:149.7px;width:6px;height:6px;background:#fdfdfd;border:0.8px solid #9c9c9c;border-radius:0.6px"></div>
<svg class="a" style="left:113px;top:147px" width="9" height="10"><path d="M0.8 5.4L2.7 8.1L7.6 1.6" stroke="#1a7a1a" stroke-width="1.6" stroke-linecap="round" stroke-linejoin="round" fill="none"/><path d="M1 5.3L2.6 7.3L6.6 2.4" stroke="#44d444" stroke-width="0.8" fill="none"/></svg>
<svg class="a" style="left:240.3px;top:150px" width="8.5" height="6"><path d="M1.6 5.4H6.6A1.7 1.7 0 0 0 6.8 2A2.1 2.1 0 0 0 3 1.9A1.7 1.7 0 0 0 1.6 5.4Z" fill="#e4eefa" stroke="#78a4dc" stroke-width="0.7"/></svg>
<div class="a cell" style="left:125px;top:149.2px">SWcorporation</div>
<div class="a cell" style="left:252.5px;top:149.2px">designer-2.kilgray.com</div>
<div class="a cell" style="left:788px;top:149.2px">01/11/2023</div>
<div class="a cell" style="left:835.5px;top:149.2px">01/11/2023</div>
<div class="a cell" style="left:883.5px;top:149.2px">0</div>
<div class="a" style="left:99px;top:158px;width:815px;height:10px;background:#fafad2;border-bottom:1px solid #e8e8dc"></div>
<div class="a" style="left:111px;top:158px;width:1px;height:9px;background:#ececdc"></div>
<div class="a" style="left:123px;top:158px;width:1px;height:9px;background:#ececdc"></div>
<div class="a" style="left:238px;top:158px;width:1px;height:9px;background:#ececdc"></div>
<div class="a" style="left:250px;top:158px;width:1px;height:9px;background:#ececdc"></div>
<div class="a" style="left:518px;top:158px;width:1px;height:9px;background:#ececdc"></div>
<div class="a" style="left:785px;top:158px;width:1px;height:9px;background:#ececdc"></div>
<div class="a" style="left:833px;top:158px;width:1px;height:9px;background:#ececdc"></div>
<div class="a" style="left:881px;top:158px;width:1px;height:9px;background:#ececdc"></div>
<div class="a" style="left:102px;top:160.7px;width:6px;height:6px;background:#fdfdfd;border:0.8px solid #9c9c9c;border-radius:0.6px"></div>
<svg class="a" style="left:113px;top:158px" width="9" height="10"><path d="M0.8 5.4L2.7 8.1L7.6 1.6" stroke="#1a7a1a" stroke-width="1.6" stroke-linecap="round" stroke-linejoin="round" fill="none"/><path d="M1 5.3L2.6 7.3L6.6 2.4" stroke="#44d444" stroke-width="0.8" fill="none"/></svg>
<svg class="a" style="left:240.3px;top:161px" width="8.5" height="6"><path d="M1.6 5.4H6.6A1.7 1.7 0 0 0 6.8 2A2.1 2.1 0 0 0 3 1.9A1.7 1.7 0 0 0 1.6 5.4Z" fill="#e4eefa" stroke="#78a4dc" stroke-width="0.7"/></svg>
<div class="a cell" style="left:125px;top:159.7px">test</div>
<div class="a cell" style="left:252.5px;top:159.7px">designer-2.kilgray.com</div>
<div class="a cell" style="left:788px;top:159.7px">17/01/2024</div>
<div class="a cell" style="left:835.5px;top:159.7px">17/01/2024</div>
<div class="a cell" style="left:883.5px;top:159.7px">0</div>
<div class="a" style="left:99px;top:168px;width:815px;height:11px;background:#fafad2;border-bottom:1px solid #e8e8dc"></div>
<div class="a" style="left:111px;top:168px;width:1px;height:10px;background:#ececdc"></div>
<div class="a" style="left:123px;top:168px;width:1px;height:10px;background:#ececdc"></div>
<div class="a" style="left:238px;top:168px;width:1px;height:10px;background:#ececdc"></div>
<div class="a" style="left:250px;top:168px;width:1px;height:10px;background:#ececdc"></div>
<div class="a" style="left:518px;top:168px;width:1px;height:10px;background:#ececdc"></div>
<div class="a" style="left:785px;top:168px;width:1px;height:10px;background:#ececdc"></div>
<div class="a" style="left:833px;top:168px;width:1px;height:10px;background:#ececdc"></div>
<div class="a" style="left:881px;top:168px;width:1px;height:10px;background:#ececdc"></div>
<div class="a" style="left:102px;top:170.7px;width:6px;height:6px;background:#fdfdfd;border:0.8px solid #9c9c9c;border-radius:0.6px"></div>
<svg class="a" style="left:113px;top:168px" width="9" height="10"><path d="M0.8 5.4L2.7 8.1L7.6 1.6" stroke="#1a7a1a" stroke-width="1.6" stroke-linecap="round" stroke-linejoin="round" fill="none"/><path d="M1 5.3L2.6 7.3L6.6 2.4" stroke="#44d444" stroke-width="0.8" fill="none"/></svg>
<svg class="a" style="left:240.3px;top:171px" width="8.5" height="6"><path d="M1.6 5.4H6.6A1.7 1.7 0 0 0 6.8 2A2.1 2.1 0 0 0 3 1.9A1.7 1.7 0 0 0 1.6 5.4Z" fill="#e4eefa" stroke="#78a4dc" stroke-width="0.7"/></svg>
<div class="a cell" style="left:125px;top:170.2px">VZS</div>
<div class="a cell" style="left:252.5px;top:170.2px">designer-2.kilgray.com</div>
<div class="a cell" style="left:788px;top:170.2px">N/A</div>
<div class="a cell" style="left:835.5px;top:170.2px">N/A</div>
<div class="a cell" style="left:883.5px;top:170.2px">0</div>
<div class="a" style="left:498px;top:294px;width:18px;height:1px;background:repeating-linear-gradient(90deg,#ffffff 0 2px,#b8bac8 2px 3px)"></div>
<div class="a" style="left:100px;top:299.7px;color:#4a4a4a;font-size:6.2px;transform:scaleX(0.887);transform-origin:0 0">Content type</div>
<div class="a" style="left:398.3px;top:299.7px;color:#4a4a4a;font-size:6.2px;transform:scaleX(0.887);transform-origin:0 0">Source language</div>
<div class="a" style="left:571px;top:299.7px;color:#4a4a4a;font-size:6.2px;transform:scaleX(0.887);transform-origin:0 0">Target language</div>
<div class="a" style="left:743.9px;top:299.7px;color:#4a4a4a;font-size:6.2px;transform:scaleX(0.887);transform-origin:0 0">Keywords</div>
<div class="a" style="left:98px;top:307px;width:297.5px;height:11.5px;background:#fff;border:1px solid #d4d4dc;border-bottom-color:#c0c0c8;border-left-color:#c8c8d0;border-radius:1px"></div>
<div class="a" style="left:100px;top:309.2px;color:#111">- show all -</div>
<svg class="a" style="left:390.0px;top:311px" width="4" height="3"><path d="M0.3 0.5L2 2.2L3.7 0.5" stroke="#777" stroke-width="0.6" fill="none"/></svg>
<div class="a" style="left:397px;top:307px;width:171px;height:11.5px;background:#eeeef3;border:1px solid #ebebf0;border-bottom-color:#ebebf0;border-left-color:#ebebf0;border-radius:1px"></div>
<div class="a" style="left:399px;top:309.2px;color:#8c8c8c">English</div>
<svg class="a" style="left:562.5px;top:311px" width="4" height="3"><path d="M0.3 0.5L2 2.2L3.7 0.5" stroke="#777" stroke-width="0.6" fill="none"/></svg>
<div class="a" style="left:570px;top:307px;width:171px;height:11.5px;background:#fff;border:1px solid #d4d4dc;border-bottom-color:#c0c0c8;border-left-color:#c8c8d0;border-radius:1px"></div>
<div class="a" style="left:572px;top:309.2px;color:#111">- project target -</div>
<svg class="a" style="left:735.5px;top:311px" width="4" height="3"><path d="M0.3 0.5L2 2.2L3.7 0.5" stroke="#777" stroke-width="0.6" fill="none"/></svg>
<div class="a" style="left:742.8px;top:307px;width:172px;height:11.5px;background:#fff;border:1px solid #d4d4dc;border-bottom-color:#c0c0c8;border-left-color:#c8c8d0;border-radius:1px"></div>
<div class="a" style="left:744.8px;top:309.2px;color:#111">- show all -</div>
<svg class="a" style="left:909.3px;top:311px" width="4" height="3"><path d="M0.3 0.5L2 2.2L3.7 0.5" stroke="#777" stroke-width="0.6" fill="none"/></svg>
<div class="a" style="left:98px;top:323px;width:816px;height:90px;background:#fff;border:1px solid #c4c6d0;border-right:none;border-top-color:#9a9a9a"></div>
<div class="a" style="left:98px;top:323px;width:1px;height:11px;background:#8e8e8e"></div>
<div class="a" style="left:99px;top:333px;width:815px;height:1px;background:#c8c8c8"></div>
<div class="a" style="left:107px;top:324px;width:1px;height:9px;background:#ededed"></div>
<div class="a" style="left:116px;top:324px;width:1px;height:9px;background:#ededed"></div>
<div class="a" style="left:334px;top:324px;width:1px;height:9px;background:#ededed"></div>
<div class="a" style="left:479px;top:324px;width:1px;height:9px;background:#ededed"></div>
<div class="a" style="left:624px;top:324px;width:1px;height:9px;background:#ededed"></div>
<div class="a" style="left:770px;top:324px;width:1px;height:9px;background:#ededed"></div>
<div class="a" style="left:120.8px;top:325.8px;color:#222;-webkit-text-stroke:0.22px #222">Name</div>
<div class="a" style="left:338.4px;top:325.8px;color:#222;-webkit-text-stroke:0.22px #222">Source language</div>
<div class="a" style="left:483.4px;top:325.8px;color:#222;-webkit-text-stroke:0.22px #222">Target language</div>
<div class="a" style="left:628.5px;top:325.8px;color:#222;-webkit-text-stroke:0.22px #222">Description</div>
<div class="a" style="left:774px;top:325.8px;color:#222;-webkit-text-stroke:0.22px #222">Keywords</div>
</body></html>
